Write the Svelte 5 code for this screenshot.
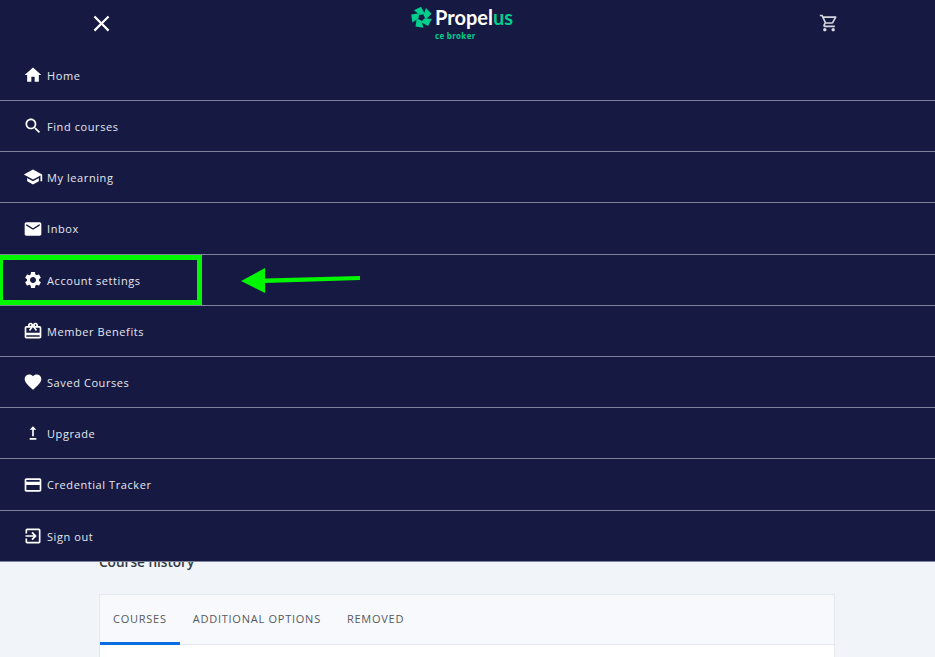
<script>
  // Material icon paths, drawn on a 24x24 box
  const items = [
    { label: 'Home', d: 'M10 20v-6h4v6h5v-8h3L12 3 2 12h3v8z' },
    { label: 'Find courses', d: 'M15.5 14h-.79l-.28-.27C15.41 12.59 16 11.11 16 9.5 16 5.91 13.09 3 9.5 3S3 5.91 3 9.5 5.91 16 9.5 16c1.61 0 3.09-.59 4.23-1.57l.27.28v.79l5 4.99L20.49 19l-4.99-5zm-6 0C7.01 14 5 11.99 5 9.5S7.01 5 9.5 5 14 7.01 14 9.5 11.99 14 9.5 14z' },
    { label: 'My learning', d: 'M5 13.18v4L12 21l7-3.82v-4L12 17l-7-3.82zM12 3L1 9l11 6 9-4.91V17h2V9L12 3z' },
    { label: 'Inbox', d: 'M20 4H4c-1.1 0-1.99.9-1.99 2L2 18c0 1.1.9 2 2 2h16c1.1 0 2-.9 2-2V6c0-1.1-.9-2-2-2zm0 4l-8 5-8-5V6l8 5 8-5v2z' },
    { label: 'Account settings', d: 'M19.14 12.94c.04-.3.06-.61.06-.94 0-.32-.02-.64-.07-.94l2.03-1.58c.18-.14.23-.41.12-.61l-1.92-3.32c-.12-.22-.37-.29-.59-.22l-2.39.96c-.5-.38-1.03-.7-1.62-.94l-.36-2.54c-.04-.24-.24-.41-.48-.41h-3.84c-.24 0-.43.17-.47.41l-.36 2.54c-.59.24-1.13.57-1.62.94l-2.39-.96c-.22-.08-.47 0-.59.22L2.74 8.87c-.12.21-.08.47.12.61l2.03 1.58c-.05.3-.09.63-.09.94s.02.64.07.94l-2.03 1.58c-.18.14-.23.41-.12.61l1.92 3.32c.12.22.37.29.59.22l2.39-.96c.5.38 1.03.7 1.62.94l.36 2.54c.05.24.24.41.48.41h3.84c.24 0 .44-.17.47-.41l.36-2.54c.59-.24 1.13-.56 1.62-.94l2.39.96c.22.08.47 0 .59-.22l1.92-3.32c.12-.22.07-.47-.12-.61l-2.01-1.58zM12 15.6c-1.98 0-3.6-1.62-3.6-3.6s1.62-3.6 3.6-3.6 3.6 1.62 3.6 3.6-1.62 3.6-3.6 3.6z' },
    { label: 'Member Benefits', d: 'M20 6h-2.18c.11-.31.18-.65.18-1 0-1.66-1.34-3-3-3-1.05 0-1.96.54-2.5 1.35l-.5.67-.5-.68C10.96 2.54 10.05 2 9 2 7.34 2 6 3.34 6 5c0 .35.07.69.18 1H4c-1.11 0-1.99.89-1.99 2L2 19c0 1.11.89 2 2 2h16c1.11 0 2-.89 2-2V8c0-1.11-.89-2-2-2zm-5-2c.55 0 1 .45 1 1s-.45 1-1 1-1-.45-1-1 .45-1 1-1zM9 4c.55 0 1 .45 1 1s-.45 1-1 1-1-.45-1-1 .45-1 1-1zm11 15H4v-2h16v2zm0-5H4V8h5.08L7 10.83 8.62 12 11 8.76l1-1.36 1 1.36L15.38 12 17 10.83 14.92 8H20v6z' },
    { label: 'Saved Courses', d: 'M12 21.35l-1.45-1.32C5.4 15.36 2 12.28 2 8.5 2 5.42 4.42 3 7.5 3c1.74 0 3.41.81 4.5 2.09C13.09 3.81 14.76 3 16.5 3 19.58 3 22 5.42 22 8.5c0 3.78-3.4 6.86-8.55 11.54L12 21.35z' },
    { label: 'Upgrade', d: 'M16 18v2H8v-2h8zM11 7.99V16h2V7.99h3L12 4 8 7.99h3z' },
    { label: 'Credential Tracker', d: 'M20 4H4c-1.11 0-1.99.89-1.99 2L2 18c0 1.11.89 2 2 2h16c1.11 0 2-.89 2-2V6c0-1.11-.89-2-2-2zm0 14H4v-6h16v6zm0-10H4V6h16v2z' },
    { label: 'Sign out', d: 'M10.09 15.59L11.5 17l5-5-5-5-1.41 1.41L12.67 11H3v2h9.67l-2.58 2.59zM19 3H5c-1.11 0-2 .9-2 2v4h2V5h14v14H5v-4H3v4c0 1.1.89 2 2 2h14c1.1 0 2-.9 2-2V5c0-1.1-.9-2-2-2z' }
  ];

  const tabs = ['COURSES', 'ADDITIONAL OPTIONS', 'REMOVED'];
  const blades = [0, 72, 144, 216, 288];
</script>

<div class="page">
  <div class="content">
    <h2>Course history</h2>
    <div class="card">
      <div class="tabs">
        {#each tabs as tab, i}
          <div class="tab" class:active={i === 0}>{tab}</div>
        {/each}
      </div>
    </div>
  </div>

  <div class="drawer">
    <header>
      <svg class="close" viewBox="0 0 24 24"><path d="M19 6.41L17.59 5 12 10.59 6.41 5 5 6.41 10.59 12 5 17.59 6.41 19 12 13.41 17.59 19 19 17.59 13.41 12z" /></svg>
      <div class="logo">
        <svg class="mark" viewBox="0 0 20 20">
          {#each blades as angle}
            <polygon points="8.400,7.600 2.800,3.200 9.600,-0.200 13.200,6.600" transform="rotate({angle} 10 10)" />
          {/each}
        </svg>
        <div class="wordmark">
          <div class="name">Propel<span>us</span></div>
          <div class="sub">ce broker</div>
        </div>
      </div>
      <svg class="cart" viewBox="0 0 24 24"><path d="M15.55 13c.75 0 1.41-.41 1.75-1.03l3.58-6.49c.37-.66-.11-1.48-.87-1.48H5.21l-.94-2H1v2h2l3.6 7.59-1.35 2.44C4.52 15.37 5.48 17 7 17h12v-2H7l1.1-2h7.45zM6.160 6h12.150l-2.760 5H8.530L6.160 6zM7 18c-1.100 0-1.990.9-1.990 2S5.900 22 7 22s2-.9 2-2-.9-2-2-2zm10 0c-1.100 0-1.990.9-1.990 2s.89 2 1.990 2 2-.9 2-2-.9-2-2-2z" /></svg>
    </header>

    <nav>
      {#each items as item}
        <div class="row">
          <svg viewBox="0 0 24 24"><path d={item.d} /></svg>
          <span>{item.label}</span>
        </div>
      {/each}
    </nav>

    <!-- green annotation on top of the screenshot -->
    <div class="highlight"></div>
    <svg class="arrow" viewBox="0 0 125 30">
      <polygon points="1,16 25,3 25,13.500 120,11 120,15 25,18 25,28" />
    </svg>
  </div>
</div>

<style>
  :global(body) {
    margin: 0;
    background: #f1f4f9;
  }

  .page {
    position: relative;
    height: 657px;
    overflow: hidden;
    background: #f1f4f9;
    font-family: "Open Sans", sans-serif;
  }

  .content {
    padding: 552px 100px 0 99px;
  }

  h2 {
    margin: 0 0 23px;
    font-size: 13.6px;
    line-height: 19px;
    font-weight: 600;
    color: #333a42;
  }

  .card {
    height: 80px;
    background: #fff;
    border: 1px solid #e6e8ef;
    border-bottom: 0;
  }

  .tabs {
    display: flex;
    height: 49px;
    background: #f8f9fc;
    border-bottom: 1px solid #e6e8ef;
  }

  .tab {
    display: flex;
    align-items: center;
    padding: 0 13px;
    font-size: 11px;
    font-weight: 500;
    letter-spacing: 0.75px;
    color: #55595e;
    border-bottom: 3px solid transparent;
    margin-bottom: -1px;
  }

  .tab.active {
    border-bottom-color: #0b6ee0;
  }

  .drawer {
    position: absolute;
    top: 0;
    left: 0;
    right: 0;
    height: 561.8px;
    display: flex;
    flex-direction: column;
    background: #161a42;
    color: #e6e7ee;
  }

  header {
    height: 49.8px;
    flex: none;
    display: flex;
    align-items: flex-start;
    padding-left: 88px;
  }

  .close {
    width: 27px;
    height: 27px;
    margin-top: 10px;
    fill: #fff;
  }

  .logo {
    display: flex;
    margin-left: 296px;
    padding-top: 7px;
    gap: 3px;
  }

  .mark {
    width: 21px;
    height: 21px;
    fill: #00cf8e;
  }

  .name {
    font-family: Lato, sans-serif;
    font-size: 20px;
    line-height: 20px;
    font-weight: 700;
    color: #fff;
  }

  .name span {
    color: #00cf8e;
  }

  .sub {
    margin-top: 2px;
    font-family: "Open Sans", sans-serif;
    font-size: 8px;
    line-height: 14px;
    font-weight: 700;
    letter-spacing: 0.3px;
    color: #00cf8e;
  }

  .cart {
    width: 20px;
    height: 20px;
    margin-left: 306px;
    margin-top: 13px;
    fill: #d6d7e0;
  }

  nav {
    flex: 1;
    display: flex;
    flex-direction: column;
  }

  .row {
    flex: 1;
    display: flex;
    align-items: center;
    gap: 4px;
    padding-left: 23px;
    border-bottom: 1px solid #7f8298;
    font-size: 11px;
    letter-spacing: 0.58px;
  }

  .row span {
    padding-top: 0.7px;
  }

  .row svg {
    width: 20px;
    height: 20px;
    fill: #fff;
    flex: none;
  }

  .highlight {
    position: absolute;
    left: 0;
    top: 255px;
    width: 194px;
    height: 40px;
    border: 5px solid #00f700;
    border-left-width: 3px;
  }

  .arrow {
    position: absolute;
    left: 240px;
    top: 265px;
    width: 125px;
    height: 30px;
    fill: #00f700;
  }
</style>
